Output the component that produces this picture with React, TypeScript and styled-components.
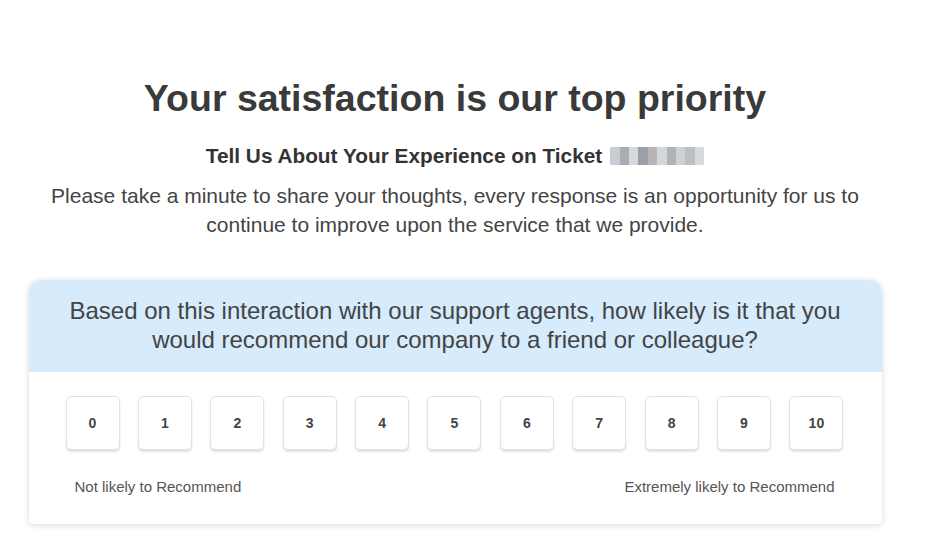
import React from "react";
import styled, { createGlobalStyle } from "styled-components";

const GlobalStyle = createGlobalStyle`
  html, body {
    margin: 0;
    padding: 0;
    background: #ffffff;
  }
  body {
    font-family: "Liberation Sans", Arial, sans-serif;
    color: #3b3b3b;
  }
`;

const Page = styled.div`
  width: 910px;
  height: 545px;
  display: flex;
  flex-direction: column;
  align-items: center;
  padding-top: 75px;
  box-sizing: border-box;
`;

const Title = styled.h1`
  margin: 0;
  font-size: 37.5px;
  font-weight: 700;
  line-height: 46px;
  color: #3a3a3a;
`;

const Subtitle = styled.h2`
  margin: 23px 0 0;
  display: flex;
  align-items: center;
  gap: 8px;
  font-size: 20.8px;
  font-weight: 700;
  line-height: 24px;
  color: #333;
`;

const Blurred = styled.span`
  display: inline-flex;
  width: 94px;
  height: 18px;

  i {
    flex: 1;
    height: 100%;
  }
`;

const Intro = styled.p`
  margin: 13px 0 0;
  width: 840px;
  text-align: center;
  font-size: 21px;
  line-height: 29px;
  color: #444;
`;

const Card = styled.section`
  margin-top: 41px;
  width: 853px;
  border-radius: 12px 12px 4px 4px;
  background: #fff;
  box-shadow: 0 1px 6px rgba(0, 0, 0, 0.16);
  overflow: hidden;
`;

const Question = styled.div`
  background: #d6ebfc;
  padding: 16px 30px 18px;
  text-align: center;
  font-size: 24px;
  line-height: 29px;
  color: #444;
`;

const Body = styled.div`
  padding: 24px 38px 29px 37px;
`;

const Scale = styled.div`
  display: flex;
  justify-content: space-between;
`;

const ScoreButton = styled.button`
  width: 54px;
  height: 54px;
  border: 1px solid #e2e2e2;
  border-radius: 5px;
  background: #fff;
  box-shadow: 0 2px 2px rgba(0, 0, 0, 0.12);
  font-family: "Liberation Sans", Arial, sans-serif;
  font-size: 14px;
  font-weight: 700;
  color: #444;
  cursor: pointer;
`;

const Labels = styled.div`
  display: flex;
  justify-content: space-between;
  padding: 0 9px;
  margin-top: 28px;
  font-size: 15px;
  color: #555;
`;

const blurColors = [
  "#c9ccd2", "#a9adb6", "#d8d8dc", "#9aa0aa", "#b8b4b8", "#d4d6da",
  "#aeb3bb", "#cfd1d5", "#bcbfc5", "#d9dadd",
];

const App = () => {
  const scores = Array.from({ length: 11 }, (_, i) => i);

  return (
    <>
      <GlobalStyle />
      <Page>
        <Title>Your satisfaction is our top priority</Title>
        <Subtitle>
          Tell Us About Your Experience on Ticket
          <Blurred aria-label="ticket number hidden">
            {blurColors.map((c, i) => (
              <i key={i} style={{ background: c }} />
            ))}
          </Blurred>
        </Subtitle>
        <Intro>
          Please take a minute to share your thoughts, every response is an
          opportunity for us to continue to improve upon the service that we
          provide.
        </Intro>

        <Card>
          <Question>
            Based on this interaction with our support agents, how likely is it
            that you would recommend our company to a friend or colleague?
          </Question>
          <Body>
            <Scale>
              {scores.map((s) => (
                <ScoreButton key={s}>{s}</ScoreButton>
              ))}
            </Scale>
            <Labels>
              <span>Not likely to Recommend</span>
              <span>Extremely likely to Recommend</span>
            </Labels>
          </Body>
        </Card>
      </Page>
    </>
  );
};

export default App;
